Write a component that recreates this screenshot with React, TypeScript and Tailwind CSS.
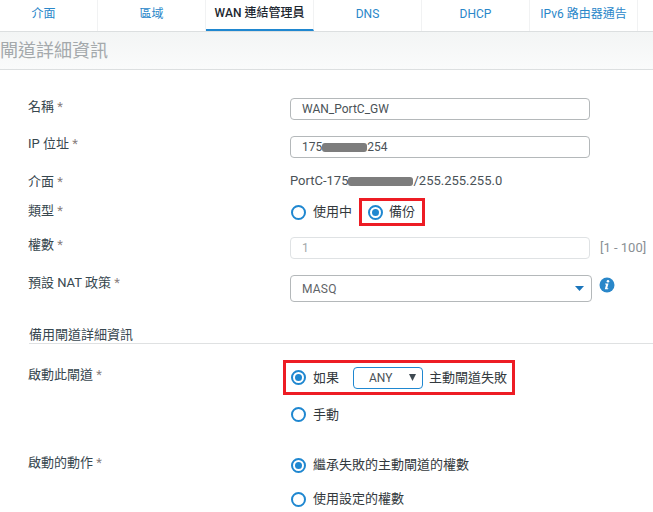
const font = '"Roboto","Noto Sans CJK TC",sans-serif';

function Radio({ on }: { on?: boolean }) {
  return (
    <span className="flex h-[15px] w-[15px] shrink-0 items-center justify-center rounded-full border-2 border-[#1f87d0] bg-white">
      {on && <span className="h-[7px] w-[7px] rounded-full bg-[#1f87d0]" />}
    </span>
  );
}

function Label({ text, cls = "" }: { text: string; cls?: string }) {
  return (
    <div className={`w-[290px] shrink-0 pl-[28px] text-[13px] leading-[18px] text-[#37474f] ${cls}`}>
      {text} <span className="text-[#8a7f80]">*</span>
    </div>
  );
}

function TextBox({ children, muted }: { children: React.ReactNode; muted?: boolean }) {
  return (
    <div
      className={`flex h-[22px] w-[300px] items-center rounded-[4px] border pl-[11px] text-[12px] ${
        muted ? "border-[#dfe2e4] text-[#a3a8ab]" : "border-[#b4b8ba] text-[#4a5257]"
      }`}
    >
      {children}
    </div>
  );
}

function Blur({ w }: { w: string }) {
  return <span className={`inline-block h-[9px] rounded-[3px] bg-[#7d7d7d] ${w}`} />;
}

const tabs = ["介面", "區域", "WAN 連結管理員", "DNS", "DHCP", "IPv6 路由器通告", ""];

export default function App() {
  return (
    <div className="h-[512px] w-[653px] overflow-hidden bg-white" style={{ fontFamily: font }}>
      <div className="flex h-[32px] border-b border-[#dcdfe0]">
        <div className="-ml-[10px] flex">
          {tabs.map((t, i) => (
            <div
              key={i}
              className={`flex h-[31px] w-[108px] shrink-0 items-center justify-center border-r border-[#f1f2f3] pb-[4px] text-[12px] ${
                i === 2 ? "border-b-[2px] border-b-[#1f87d0] font-medium text-[#1c2730]" : "text-[#2a87c9]"
              }`}
            >
              {t}
            </div>
          ))}
        </div>
      </div>
      <div className="flex h-[38px] items-center border-b border-[#dcdfe0] bg-gradient-to-b from-[#f3f5f5] to-[#fafbfb] text-[18px] text-[#a4a9ac]">
        閘道詳細資訊
      </div>

      <div className="mt-[28px] flex">
        <Label text="名稱" />
        <TextBox>WAN_PortC_GW</TextBox>
      </div>
      <div className="mt-[16px] flex">
        <Label text="IP 位址" cls="-mt-[1px]" />
        <TextBox>
          175
          <Blur w="w-[45px]" />
          254
        </TextBox>
      </div>
      <div className="mt-[14px] flex h-[18px]">
        <Label text="介面" cls="pt-[1px]" />
        <div className="flex items-center text-[13px] text-[#4a5257]">
          PortC-175
          <Blur w="w-[65px]" />
          /255.255.255.0
        </div>
      </div>
      <div className="mt-[8px] flex h-[28px]">
        <Label text="類型" cls="pt-[4px]" />
        <div className="flex items-center">
          <span className="ml-[1px] flex items-center gap-[7px] text-[13px] text-[#33393d]">
            <Radio />
            使用中
          </span>
          <span className="ml-[7px] flex h-[28px] w-[66px] items-center gap-[6px] border-[3px] border-[#ed1c24] pl-[6px] text-[13px] text-[#33393d]">
            <Radio on />
            備份
          </span>
        </div>
      </div>
      <div className="mt-[11px] flex">
        <Label text="權數" cls="-mt-[1px]" />
        <TextBox muted>1</TextBox>
        <span className="ml-[10px] flex items-center text-[13px] text-[#8a9094]">[1 - 100]</span>
      </div>
      <div className="mt-[16px] flex">
        <Label text="預設 NAT 政策" cls="-mt-[1px]" />
        <div className="flex h-[27px] w-[302px] items-center justify-between rounded-[4px] border border-[#b4b8ba] pl-[11px] pr-[7px] text-[12px] tracking-[0.2px] text-[#5f6468]">
          MASQ
          <svg width="9" height="5" viewBox="0 0 9 5">
            <path d="M0 0h9L4.5 5z" fill="#1b75bb" />
          </svg>
        </div>
        <svg className="ml-[7px] mt-[2px]" width="16" height="16" viewBox="0 0 16 16">
          <circle cx="8" cy="8" r="7.5" fill="#2a87c9" />
          <circle cx="9" cy="4.2" r="1.3" fill="#fff" />
          <path d="M6.2 6.6h3.3L8.2 11.2h1.2l-.4 1H5.8L7.1 7.6H6z" fill="#fff" />
        </svg>
      </div>

      <div className="ml-[29px] mt-[25px] h-[17px] border-b border-[#dfe1e2] text-[13px] leading-[15px] text-[#37474f]">
        備用閘道詳細資訊
      </div>

      <div className="mt-[16px] flex">
        <Label text="啟動此閘道" cls="pt-[6px]" />
        <div>
          <div className="-ml-[7px] flex h-[35px] w-[232px] items-center border-[3px] border-[#ed1c24] pl-[5px] text-[13px] text-[#33393d]">
            <Radio on />
            <span className="ml-[7px]">如果</span>
            <span className="ml-[14px] flex h-[22px] w-[70px] items-center justify-between rounded-[4px] border border-[#1f87d0] pl-[15px] pr-[6px] text-[12px] text-[#4a5257]">
              ANY
              <svg width="7" height="7" viewBox="0 0 7 7">
                <path d="M0 0h7L3.5 7z" fill="#3f4a52" />
              </svg>
            </span>
            <span className="ml-[6px]">主動閘道失敗</span>
          </div>
          <div className="ml-[1px] mt-[10px] flex h-[19px] items-center gap-[7px] text-[13px] text-[#33393d]">
            <Radio />
            手動
          </div>
        </div>
      </div>

      <div className="mt-[31px] flex">
        <Label text="啟動的動作" cls="-mt-[1px]" />
        <div className="ml-[1px]">
          <div className="flex h-[20px] items-center gap-[7px] text-[13px] text-[#33393d]">
            <Radio on />
            繼承失敗的主動閘道的權數
          </div>
          <div className="mt-[14px] flex h-[20px] items-center gap-[7px] text-[13px] text-[#33393d]">
            <Radio />
            使用設定的權數
          </div>
        </div>
      </div>
    </div>
  );
}
